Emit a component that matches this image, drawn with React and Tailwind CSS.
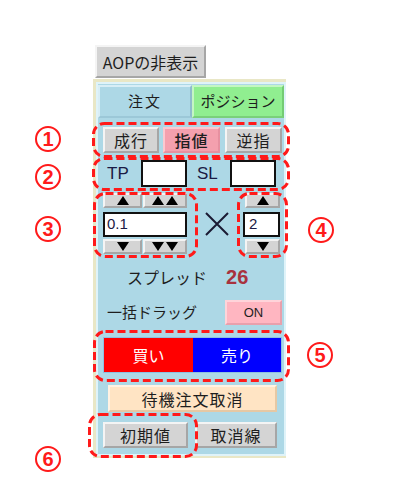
import React from "react";

const btn3d =
  "flex items-center justify-center bg-[#d4d4d4] border-2 border-t-[#f4f4f4] border-l-[#f4f4f4] border-r-[#a6a6a6] border-b-[#a6a6a6] text-[#1e1e1e]";

function Up({ n = 1, w }) {
  return (
    <div className={`${btn3d} h-[15px] gap-[2px]`} style={{ width: w }}>
      {Array.from({ length: n }).map((_, i) => (
        <svg key={i} width="12" height="9" viewBox="0 0 12 9">
          <path d="M6 0 L12 9 L0 9 Z" fill="#000" />
        </svg>
      ))}
    </div>
  );
}
function Down({ n = 1, w }) {
  return (
    <div className={`${btn3d} h-[15px] gap-[2px]`} style={{ width: w }}>
      {Array.from({ length: n }).map((_, i) => (
        <svg key={i} width="12" height="9" viewBox="0 0 12 9">
          <path d="M0 0 L12 0 L6 9 Z" fill="#000" />
        </svg>
      ))}
    </div>
  );
}

function Circ({ x, y, n }) {
  return (
    <div
      className="absolute w-[26px] h-[26px] rounded-full border-2 border-[#ff1a1a] text-[#ff1a1a] text-[20px] leading-none flex items-center justify-center font-semibold"
      style={{ left: x - 13, top: y - 13, fontFamily: '"Liberation Sans", Arial, sans-serif' }}
    >
      {n}
    </div>
  );
}

export default function App() {
  const dashes = [
    [92, 122, 198, 36],
    [92, 157, 198, 34],
    [93, 192, 105, 66],
    [237, 192, 51, 66],
    [93, 330, 197, 52],
    [88, 413, 110, 45],
  ];
  return (
    <div
      className="relative w-[399px] h-[500px] bg-white overflow-hidden text-[#1e1e1e]"
      style={{ fontFamily: '"Noto Sans CJK JP", "Noto Sans", sans-serif' }}
    >
      <div className="pl-[93px] pt-[45px] flex flex-col items-start">
        <div className={`${btn3d} ml-[2px] w-[111px] h-[33px] text-[16px]`}>AOPの非表示</div>
        <div className="mt-[1px] w-[193px] h-[379px] border-t-[3px] border-l-[3px] border-b-[2px] border-[#e9e7c6] border-r-0">
          <div className="w-full h-full border-2 border-[#dff3f9] bg-[#add8e6] flex flex-col">
            {/* tabs */}
            <div className="mt-[1px] h-[33px] flex text-[15px]">
              <div className="w-[94px] flex items-center justify-center bg-[#add8e6] border-2 border-t-[#d8eef6] border-l-[#d8eef6] border-r-[#8fbccc] border-b-[#9cc8d8] tracking-[2px]">
                注文
              </div>
              <div className="flex-1 flex items-center justify-center bg-[#90ee90] border-2 border-t-[#c4f6c4] border-l-[#c4f6c4] border-r-[#74cc74] border-b-[#7ad07a]">
                ポジション
              </div>
            </div>
            {/* row1 */}
            <div className="mt-[9px] h-[26px] flex pl-[5px] text-[16px]">
              <div className={`${btn3d} w-[56px] h-full tracking-[1px]`}>成行</div>
              <div className="ml-[4px] w-[57px] h-full flex items-center justify-center bg-[#f4a0ae] border-2 border-t-[#fbc8d0] border-l-[#fbc8d0] border-r-[#e790a0] border-b-[#e790a0] font-medium tracking-[1px]">
                指値
              </div>
              <div className={`${btn3d} ml-[5px] w-[57px] h-full tracking-[1px]`}>逆指</div>
            </div>
            {/* row2 */}
            <div className="mt-[7px] h-[27px] flex items-center pl-[9px]">
              <div className="w-[34px] text-[17px] text-[#1a1a44]" style={{ fontFamily: '"Liberation Sans", Arial, sans-serif' }}>TP</div>
              <div className="w-[46px] h-full bg-white border-2 border-[#111]" />
              <div className="ml-[10px] w-[33px] text-[17px] text-[#1a1a44]" style={{ fontFamily: '"Liberation Sans", Arial, sans-serif' }}>SL</div>
              <div className="w-[46px] h-full bg-white border-2 border-[#111]" />
            </div>
            {/* row3 spinners */}
            <div className="mt-[6px] flex pl-[5px]">
              <div className="flex flex-col w-[84px]">
                <div className="flex gap-[1px]">
                  <Up w={39} />
                  <Up n={2} w={44} />
                </div>
                <div
                  className="mt-[4px] h-[25px] bg-white border-2 border-[#111] flex items-center pl-[2px] text-[15px] text-[#1a1a44]"
                  style={{ fontFamily: '"Liberation Sans", Arial, sans-serif' }}
                >
                  0.1
                </div>
                <div className="mt-[2px] flex gap-[1px]">
                  <Down w={39} />
                  <Down n={2} w={44} />
                </div>
              </div>
              <div className="ml-[18px] self-center">
                <svg width="24" height="24" viewBox="0 0 24 24">
                  <path d="M1 1 L23 23 M23 1 L1 23" stroke="#1a1a33" strokeWidth="2" />
                </svg>
              </div>
              <div className="ml-[14px] flex flex-col w-[37px]">
                <div className="flex justify-end"><Up w={35} /></div>
                <div
                  className="mt-[4px] h-[25px] bg-white border-2 border-[#111] flex items-center pl-[4px] text-[15px] text-[#1a1a44]"
                  style={{ fontFamily: '"Liberation Sans", Arial, sans-serif' }}
                >
                  2
                </div>
                <div className="mt-[2px] flex justify-end"><Down w={35} /></div>
              </div>
            </div>
            {/* spread */}
            <div className="mt-[9px] h-[28px] flex items-center pl-[29px]">
              <span className="text-[16px]">スプレッド</span>
              <span
                className="ml-[19px] text-[20px] font-bold text-[#a8323e]"
                style={{ fontFamily: '"Liberation Sans", Arial, sans-serif' }}
              >
                26
              </span>
            </div>
            {/* drag */}
            <div className="mt-[9px] h-[25px] flex items-center pl-[9px] pr-[2px]">
              <span className="text-[15px]">一括ドラッグ</span>
              <div
                className="ml-auto w-[57px] h-full flex items-center justify-center bg-[#ffb6c1] border-2 border-t-[#ffd4da] border-l-[#ffd4da] border-r-[#e8a0ac] border-b-[#e8a0ac] text-[13px]"
                style={{ fontFamily: '"Liberation Sans", Arial, sans-serif' }}
              >
                ON
              </div>
            </div>
            {/* buy sell */}
            <div className="mt-[12px] ml-[5px] w-[179px] h-[36px] flex text-white text-[16px] border border-[#8fc0e0]">
              <div className="w-[89px] bg-[#ff0000] flex items-center justify-center">買い</div>
              <div className="flex-1 bg-[#0000ff] flex items-center justify-center">売り</div>
            </div>
            {/* cancel pending */}
            <div className="mt-[12px] ml-[10px] w-[169px] h-[27px] flex items-center justify-center bg-[#ffe4c4] border-2 border-t-[#fff2e2] border-l-[#fff2e2] border-r-[#e6c8a4] border-b-[#e6c8a4] text-[16px] tracking-[1px]">
              待機注文取消
            </div>
            {/* last row */}
            <div className="mt-[10px] h-[26px] flex pl-[5px] text-[16px]">
              <div className={`${btn3d} w-[85px] h-full tracking-[1px]`}>初期値</div>
              <div className={`${btn3d} ml-[7px] w-[82px] h-full tracking-[1px]`}>取消線</div>
            </div>
          </div>
        </div>
      </div>

      {/* annotations */}
      <svg className="absolute left-0 top-0 pointer-events-none" width="399" height="500">
        {dashes.map(([x, y, w, h], i) => (
          <rect
            key={i}
            x={x + 1.5}
            y={y + 1.5}
            width={w - 3}
            height={h - 3}
            rx="11"
            fill="none"
            stroke="#ff1a1a"
            strokeWidth="3"
            strokeDasharray="8 4"
          />
        ))}
      </svg>
      <Circ x={48} y={139} n="1" />
      <Circ x={48} y={177} n="2" />
      <Circ x={48} y={229} n="3" />
      <Circ x={321} y={230} n="4" />
      <Circ x={320} y={355} n="5" />
      <Circ x={48} y={459} n="6" />
    </div>
  );
}
